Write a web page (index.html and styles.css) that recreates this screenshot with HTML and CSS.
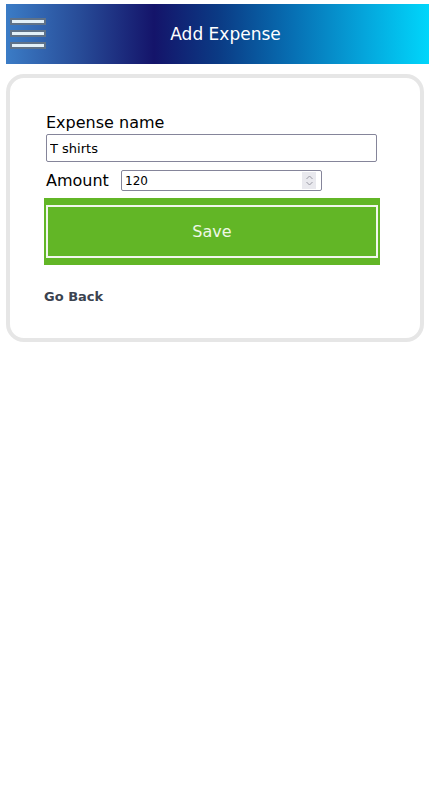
FILE: index.html
```html
<!DOCTYPE html>
<html lang="en">
<head>
<meta charset="utf-8">
<title>Add Expense</title>
<link rel="stylesheet" href="styles.css">
</head>
<body>
  <header class="topbar">
    <div class="hamburger" aria-label="Menu">
      <span class="bar"></span>
      <span class="bar"></span>
      <span class="bar"></span>
    </div>
    <h1 class="title">Add Expense</h1>
  </header>

  <main class="card">
    <form class="form">
      <label class="label" for="name">Expense name</label>
      <input class="text-input" id="name" type="text" value="T shirts">

      <div class="amount-row">
        <label class="label amount-label" for="amount">Amount</label>
        <div class="amount-box">
          <input class="amount-input" id="amount" type="text" value="120">
          <span class="spinner">
            <svg width="9" height="13" viewBox="0 0 9 13"><path d="M1.5 5 L4.5 2 L7.5 5" fill="none" stroke="#9a9aa4" stroke-width="1"/><path d="M1.5 8 L4.5 11 L7.5 8" fill="none" stroke="#9a9aa4" stroke-width="1"/></svg>
          </span>
        </div>
      </div>

      <button class="save" type="button"><span class="save-inner">Save</span></button>

      <a class="back" href="#">Go Back</a>
    </form>
  </main>
</body>
</html>
```

FILE: styles.css
```css
* { box-sizing: border-box; }

html, body {
  margin: 0;
  background: #ffffff;
}

body {
  padding: 4px 2px 0 6px;
  font-family: "DejaVu Sans", sans-serif;
  color: #000;
}

.topbar {
  width: 423px;
  height: 60px;
  display: flex;
  align-items: center;
  background: linear-gradient(to right, #3b7cc6 0%, #274a96 18%, #14146a 35%, #0b3a84 50%, #0770b4 68%, #05a6dc 85%, #00d6fb 100%);
}

.hamburger {
  display: flex;
  flex-direction: column;
  gap: 5px;
  margin-left: 4px;
  margin-top: -2px;
}

.bar {
  display: block;
  width: 36px;
  height: 7px;
  background: #e2f0f8;
  border: 2px solid #5f7288;
}

.title {
  flex: 1;
  margin: 0;
  padding-right: 24px;
  text-align: center;
  font-size: 17px;
  font-weight: normal;
  color: #ffffff;
}

.card {
  width: 418px;
  margin-top: 10px;
  border: 4px solid #e6e6e6;
  border-radius: 18px;
  padding: 35px 0 33px 34px;
}

.form {
  display: flex;
  flex-direction: column;
  align-items: flex-start;
}

.label {
  display: block;
  margin-left: 2px;
  font-size: 16px;
  line-height: 20px;
}

.text-input {
  margin: 1px 0 0 2px;
  width: 331px;
  height: 28px;
  border: 1px solid #85859a;
  border-radius: 2px;
  padding: 0 3px;
  font-family: "DejaVu Sans", sans-serif;
  font-size: 13px;
  color: #000;
  background: #fff;
}

.amount-row {
  display: flex;
  align-items: center;
  margin-top: 8px;
  height: 21px;
}

.amount-label {
  width: 75px;
}

.amount-box {
  width: 201px;
  height: 21px;
  display: flex;
  align-items: center;
  border: 1px solid #85859a;
  border-radius: 2px;
  background: #fff;
  padding: 0 5px 0 3px;
}

.amount-input {
  flex: 1;
  min-width: 0;
  border: none;
  outline: none;
  padding: 0;
  font-family: "DejaVu Sans", sans-serif;
  font-size: 12px;
  color: #000;
  background: transparent;
}

.spinner {
  width: 14px;
  height: 17px;
  background: #e9e9ee;
  display: flex;
  align-items: center;
  justify-content: center;
}

.save {
  margin-top: 7px;
  width: 336px;
  height: 67px;
  padding: 7px 2px;
  border: none;
  background: #62b626;
  cursor: pointer;
  display: flex;
}

.save-inner {
  flex: 1;
  display: flex;
  align-items: center;
  justify-content: center;
  border: 2px solid #f2f6ee;
  font-family: "DejaVu Sans", sans-serif;
  font-size: 16px;
  color: #eef8e6;
}

.back {
  margin-top: 24px;
  font-size: 13px;
  line-height: 16px;
  font-weight: bold;
  color: #3b4350;
  text-decoration: none;
}
```
